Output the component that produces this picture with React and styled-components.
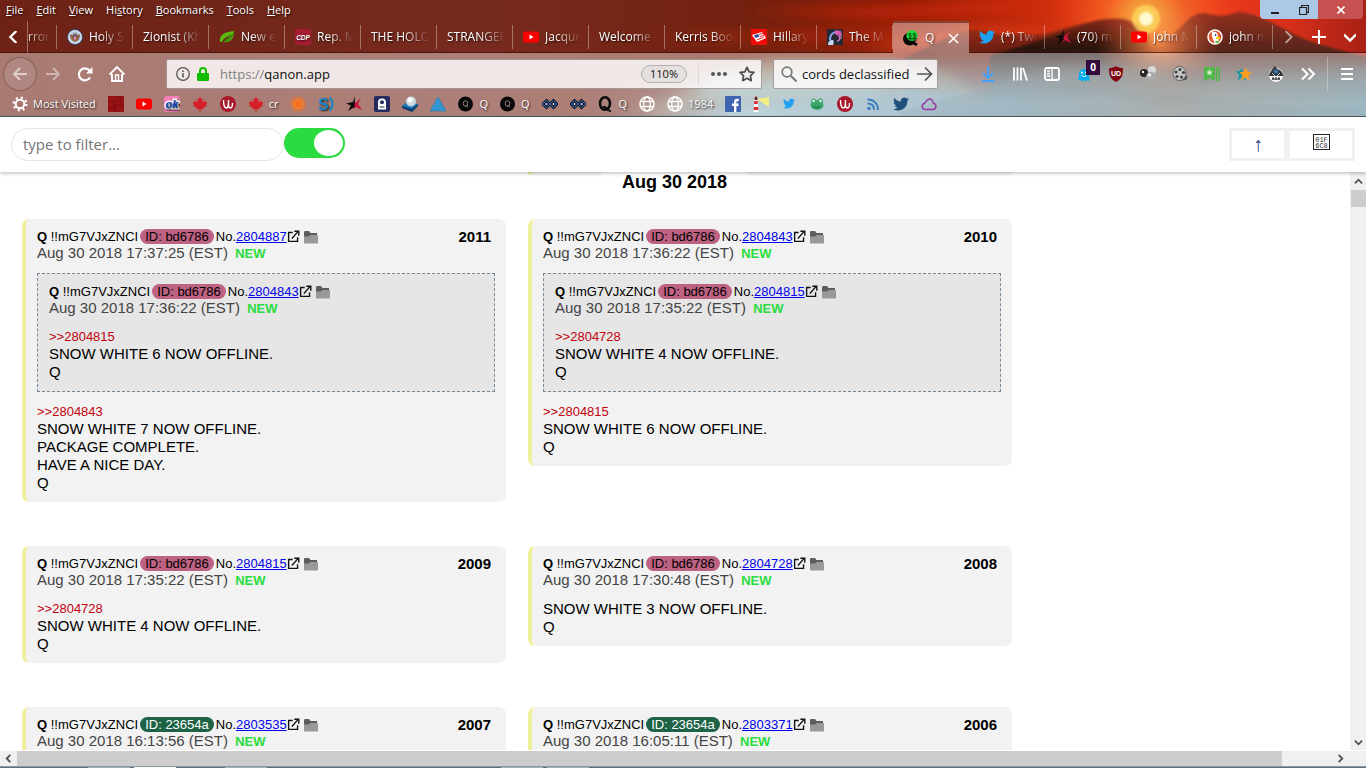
import React from "react";
import styled, { createGlobalStyle, css } from "styled-components";

const ui = '"Open Sans", "Noto Sans", sans-serif';
const arial = '"Liberation Sans", Arial, sans-serif';

const GlobalStyle = createGlobalStyle`
  * { box-sizing: border-box; }
  html, body, #root { height: 100%; }
  body { margin: 0; overflow: hidden; background: #fff; font-family: ${arial}; }
  button, input { font: inherit; color: inherit; margin: 0; }
  button { padding: 0; border: 0; background: none; }
  svg { display: block; flex: none; }
`;

/* ---------- window ---------- */

const Window = styled.div`
  display: flex;
  flex-direction: column;
  height: 100vh;
`;

const Chrome = styled.header`
  position: relative;
  flex: none;
  overflow: hidden;
  border-bottom: 1px solid #4c5f6c;
  color: #fff;
  font: 11px/16px ${ui};
  text-shadow: 1px 1px 2px rgba(0, 0, 0, 0.8);
`;

const Artwork = styled.svg`
  position: absolute;
  inset: 0;
  width: 100%;
  height: 100%;
`;

const ChromeBody = styled.div`
  position: relative;
`;

const TopRow = styled.div`
  display: flex;
  justify-content: space-between;
  align-items: flex-start;
  height: 21px;
`;

const MenuBar = styled.nav`
  display: flex;
  gap: 13px;
  padding: 2px 6px;
`;

const MenuButton = styled.button`
  line-height: 16px;
  text-shadow: inherit;
`;

const WindowButtons = styled.div`
  display: flex;
  margin-right: 3px;
  border-radius: 0 0 4px 4px;
  overflow: hidden;
`;

const WindowButton = styled.button`
  display: flex;
  align-items: center;
  justify-content: center;
  width: ${(p) => (p.$close ? 45 : 29)}px;
  height: 19px;
  background: ${(p) => (p.$close ? "#c75050" : "#adc8e6")};
`;

/* ---------- tabs ---------- */

const TabRow = styled.div`
  display: flex;
  height: 32px;
`;

const TabArrow = styled.button`
  display: flex;
  align-items: center;
  justify-content: center;
  width: ${(p) => p.$width}px;
  border-right: ${(p) => (p.$edge ? "1px solid rgba(255,255,255,.35)" : "0")};
  border-bottom: 1px solid rgba(50, 5, 0, 0.6);
`;

const TabStrip = styled.div`
  display: flex;
  flex: 1;
  justify-content: flex-end;
  overflow: hidden;
`;

const Tab = styled.button`
  display: flex;
  align-items: center;
  gap: 6px;
  flex: 0 0 ${(p) => (p.$partial ? 29 : 76)}px;
  min-width: 0;
  padding: ${(p) => (p.$partial ? "0 2px 0 0" : p.$active ? "0 10px" : "0 4px 0 10px")};
  position: relative;
  font-size: 12px;
  text-align: left;
  text-shadow: inherit;
  ${(p) =>
    p.$active
      ? css`
          background: rgba(255, 255, 255, 0.4);
          border-top: 2px solid rgba(60, 10, 0, 0.5);
        `
      : css`
          border-bottom: 1px solid rgba(50, 5, 0, 0.6);
          &::after {
            content: "";
            position: absolute;
            right: 0;
            top: 4px;
            bottom: 3px;
            width: 1px;
            background: rgba(255, 255, 255, 0.35);
          }
        `}
`;

const TabLabel = styled.span`
  flex: 1;
  white-space: nowrap;
  ${(p) =>
    !p.$solid &&
    css`
      mask-image: linear-gradient(to left, transparent 4px, #000 30px);
    `}
`;

/* ---------- navigation bar ---------- */

const Toolbars = styled.div`
  background: rgba(255, 255, 255, 0.4);
`;

const NavBar = styled.div`
  display: flex;
  align-items: center;
  height: 41px;
  padding: 0 3px;
`;

const NavButton = styled.button`
  position: relative;
  display: flex;
  align-items: center;
  justify-content: center;
  width: 32px;
  height: 32px;
`;

const BackButton = styled(NavButton)`
  width: 34px;
  height: 34px;
  border: 1px solid rgba(90, 50, 45, 0.45);
  border-radius: 50%;
  background: rgba(255, 255, 255, 0.1);
`;

const Field = styled.div`
  display: flex;
  align-items: center;
  height: 30px;
  border: 1px solid rgba(70, 50, 50, 0.45);
  border-radius: 2px;
  background: rgba(255, 255, 255, 0.82);
  color: #111;
  font-size: 13px;
  text-shadow: none;
`;

const UrlField = styled(Field)`
  flex: 1;
  margin: 0 11px 0 33px;
  padding: 0 6px 0 9px;
`;

const SearchField = styled(Field)`
  gap: 5px;
  width: 165px;
  margin-right: 34px;
  padding: 0 4px 0 7px;
`;

const UrlText = styled.label`
  position: relative;
  flex: 1;
  margin-left: 10px;
  color: #0c0c0d;
`;

const Scheme = styled.span`
  color: #808080;
`;

const PlainInput = styled.input`
  flex: 1;
  min-width: 0;
  padding: 0;
  border: 0;
  outline: 0;
  background: none;
`;

const HiddenInput = styled.input`
  position: absolute;
  inset: 0;
  width: 100%;
  border: 0;
  opacity: 0;
`;

const Zoom = styled.button`
  width: 46px;
  height: 18px;
  margin-right: 11px;
  border: 1px solid #b5b0af;
  border-radius: 9px;
  background: rgba(210, 210, 210, 0.4);
  font-size: 11px;
  line-height: 14px;
`;

const Divider = styled.span`
  width: 1px;
  height: ${(p) => p.$height}px;
  margin: 0 ${(p) => p.$after}px 0 ${(p) => p.$before || 0}px;
  background: ${(p) => p.$color};
`;

const FieldButton = styled.button`
  margin-left: ${(p) => p.$before || 0}px;
`;

const Badge = styled.span`
  position: absolute;
  left: 18px;
  top: 2px;
  width: 14px;
  height: 15px;
  background: #330b3d;
  font: bold 10px/14px ${ui};
  text-align: center;
`;

/* ---------- bookmarks ---------- */

const BookmarkBar = styled.div`
  display: flex;
  gap: 12px;
  align-items: center;
  height: 22px;
  padding: 0 12px 2px;
`;

const Bookmark = styled.a`
  display: flex;
  align-items: center;
  gap: 5px;
  color: inherit;
  text-decoration: none;
`;

/* ---------- page ---------- */

const Page = styled.div`
  flex: 1;
  min-height: 0;
  display: flex;
  flex-direction: column;
`;

const FilterBar = styled.form`
  position: relative;
  z-index: 2;
  display: flex;
  align-items: flex-start;
  flex: none;
  height: 55px;
  padding: 11px;
  background: #fff;
  box-shadow: 0 1px 4px rgba(0, 0, 0, 0.3);
`;

const FilterInput = styled.input`
  width: 273px;
  height: 33px;
  padding: 0 11px 2px;
  border: 1px solid #e6e6e6;
  border-radius: 17px;
  outline: 0;
  background: #fff;
  font: 15px ${ui};
  &::placeholder {
    color: #757575;
    opacity: 1;
  }
`;

const Toggle = styled.input`
  appearance: none;
  width: 61px;
  height: 30px;
  padding: 2px;
  border-radius: 15px;
  background: #2adc3f;
  display: flex;
  justify-content: flex-end;
  &::before {
    content: "";
    width: 29px;
    height: 26px;
    border-radius: 50%;
    background: #fff;
  }
`;

const PageButtons = styled.div`
  display: flex;
  margin-left: auto;
`;

const PageButton = styled.button`
  display: flex;
  justify-content: center;
  align-items: center;
  width: ${(p) => p.$width}px;
  height: 33px;
  padding-bottom: ${(p) => p.$lift || 0}px;
  border: 3px solid #f1f1f1;
  background: #fff;
  color: #163f7d;
  font-size: 20px;
`;

const Viewport = styled.div`
  flex: 1;
  min-height: 0;
  display: flex;
`;

const Content = styled.main`
  position: relative;
  flex: 1;
  overflow: hidden;
  padding: 0 11px;
`;

const DayHeading = styled.h2`
  position: absolute;
  top: 0;
  left: 50%;
  width: 147px;
  margin: 0 0 0 -74px;
  background: #fff;
  font: bold 18px/20px ${arial};
  text-align: center;
`;

const Grid = styled.div`
  display: grid;
  grid-template-columns: 484px 484px;
  gap: 44px 22px;
  align-items: start;
  padding: 0 11px;
`;

const Card = styled.article`
  padding: 9px 11px 10px;
  border-left: 4px solid #f0f09c;
  border-radius: 7px;
  background: #f2f2f2;
  color: #000;
  font-size: 15px;
  line-height: 18px;
`;

const CardEnd = styled.div`
  grid-column: 2;
  height: 3px;
  border-left: 4px solid #f0f09c;
  border-radius: 0 0 6px 6px;
  background: #f2f2f2;
`;

const Quote = styled.blockquote`
  margin: 11px 0 0;
  padding: 9px 11px 10px;
  border: 1px dashed #778899;
  background: #e6e6e6;
`;

const Meta = styled.div`
  display: flex;
  align-items: center;
  gap: 2px;
  height: 17px;
  font-size: 13px;
  line-height: 17px;
  white-space: pre;
`;

const UserId = styled.span`
  padding: 0 5px;
  border-radius: 8px;
  line-height: 15px;
  background: ${(p) => (p.$green ? "#1f6347" : "#bd6283")};
  color: ${(p) => (p.$green ? "#fff" : "#000")};
`;

const PostLink = styled.a`
  color: #0000ee;
`;

const LinkIcons = styled.span`
  display: flex;
  align-items: center;
  gap: 3px;
  margin-left: -2px;
`;

const PostNumber = styled.strong`
  margin-left: auto;
  padding-right: 4px;
  font-size: 15px;
`;

const Stamp = styled.div`
  height: 17px;
  color: #444;
  line-height: 15px;
`;

const NewMark = styled.strong`
  margin-left: 3px;
  color: #2adc3f;
  font-size: 13px;
`;

const Body = styled.div`
  margin-top: 11px;
`;

const Ref = styled.a`
  display: block;
  color: #c3000d;
  font-size: 13px;
  line-height: 17px;
  text-decoration: none;
`;

const Line = styled.p`
  margin: 0;
`;

/* ---------- scrollbars ---------- */

const VScroll = styled.div`
  display: flex;
  flex-direction: column;
  align-items: center;
  width: 16px;
  padding: 5px 0 3px;
  background: #f0f0f0;
`;

const VThumb = styled.div`
  width: 15px;
  height: 17px;
  margin: 4px 0 auto;
  background: #cdcdcd;
`;

const HScroll = styled.div`
  display: flex;
  align-items: center;
  flex: none;
  height: 16px;
  padding: 0 21px 0 4px;
  border-top: 1px solid #fff;
  background: #f0f0f0;
`;

const HThumb = styled.div`
  flex: 1;
  height: 15px;
  margin: 0 54px 0 4px;
  background: #cdcdcd;
`;

const TaskbarEdge = styled.footer`
  display: flex;
  gap: 4px;
  flex: none;
  height: 2px;
  padding-left: 88px;
  border-top: 1px solid #8b9aa3;
  background: #5e6e78;
`;

const TaskbarItem = styled.span`
  width: 42px;
  margin-right: ${(p) => p.$after || 0}px;
  background: ${(p) => (p.$lit ? "#f4f6f7" : "#a3afb6")};
`;

/* ---------- drawings ---------- */

const Svg = ({ s = 16, box = 16, children, ...rest }) => (
  <svg width={s} height={s} viewBox={`0 0 ${box} ${box}`} fill="none" aria-hidden="true" {...rest}>
    {children}
  </svg>
);

const Bird = ({ color = "#1da1f2", box = "0 0 24 24" }) => (
  <svg width="16" height="16" viewBox={box} aria-hidden="true">
    <path fill={color} d="M23.9 4.600c-.9.4-1.800.7-2.800.8 1-.6 1.800-1.600 2.200-2.700-1 .6-2 1-3.100 1.200a4.900 4.900 0 0 0-8.400 4.500C7.700 8.100 4.100 6.100 1.700 3.100.4 5.300 1 8.100 3.200 9.700c-.8 0-1.600-.3-2.200-.6 0 2.300 1.500 4.400 3.900 4.900-.7.2-1.500.2-2.200.1a5 5 0 0 0 4.600 3.400A9.900 9.900 0 0 1 0 19.500a14 14 0 0 0 21.500-12.400c1-.7 1.800-1.600 2.400-2.500z" />
  </svg>
);
const YouTube = () => (
  <Svg>
    <rect y="2.500" width="16" height="11" rx="2.800" fill="#f00" />
    <path d="M6.500 5.500v5l4-2.500z" fill="#fff" />
  </Svg>
);
const Seal = () => (
  <Svg>
    <circle cx="8" cy="8" r="7.500" fill="#dfe3ea" stroke="#27467c" />
    <circle cx="8" cy="8" r="5.400" fill="#a9bbd8" />
    <path d="M2.500 5.500l3 .5L8 4l2.500 2 3-.5-1.500 4.500-2.500 2.500h-3L4 10z" fill="#8b6a4a" />
    <path d="M6.500 6.500h3V10L8 11.500 6.500 10z" fill="#c8354a" />
    <path d="M6.500 6.500h3V8h-3z" fill="#2f4f9c" />
    <path d="M8 7.500v3" stroke="#fff" />
  </Svg>
);
const Leaf = () => (
  <Svg>
    <path d="M1 13C0 6 5 3 15 2c0 7-3 12-10 11 2-3 5-5 7-7-4 1-7 3-9 7z" fill="#5cb811" />
    <path d="M5 13c4 1 9-3 10-11-1 3-6 6-10 11z" fill="#3d8c08" />
  </Svg>
);
const Cdp = () => (
  <Svg>
    <rect width="16" height="16" fill="#a41c33" />
    <text x="8" y="10.500" fontSize="6.500" fontWeight="bold" fontStyle="italic" fontFamily="Liberation Sans" textAnchor="middle" fill="#fff">CDP</text>
  </Svg>
);
const RedFlag = () => (
  <Svg>
    <rect width="16" height="16" fill="#f00b0b" />
    <path d="M1 6l10-3 4 6-9 4z" fill="#fff" />
    <path d="M3 6.300l4-1.300 1.500 2.500-4 1.500z" fill="#2a4b94" />
    <path d="M8 5.500l4-1.200M9 7.500l4-1.300M6 11l7-3" stroke="#f00b0b" strokeWidth=".9" />
  </Svg>
);
const Headset = () => (
  <Svg>
    <rect width="16" height="16" fill="#252933" />
    <path d="M3 11C3 5 7 3 10 3" stroke="#8aa2e8" strokeWidth="2.200" />
    <path d="M1 16c0-4 2-5 4-5s2 2 1 5z" fill="#c5d8f8" />
    <path d="M8 1l6 1 1 4-4 1-3-2z" fill="#d65bb0" />
    <path d="M12 7c2 3 0 5-2 5" stroke="#c97cc9" strokeWidth="1.500" />
    <path d="M14 6v4" stroke="#e58bb4" />
  </Svg>
);
const QBadge = () => (
  <Svg>
    <circle cx="6.500" cy="9" r="6.500" fill="#0b0b0b" />
    <path d="M9 12l5 3" stroke="#0b0b0b" strokeWidth="3" />
    <circle cx="9" cy="5.500" r="5.500" fill="#20dc35" />
    <text x="9" y="9" fontSize="9" fontFamily="Liberation Sans" textAnchor="middle" fill="#063d0b">11</text>
  </Svg>
);
const StarMan = () => (
  <Svg>
    <path d="M8 4l1.500 3L15 2l-3 6 4 6-6-3-2 2z" fill="#c9143c" />
    <path d="M9 0L7 6 0 7.500l5 2L2 15l6.500-4z" fill="#0c0c0c" />
  </Svg>
);
const Duck = () => (
  <Svg>
    <circle cx="8" cy="8" r="7" fill="#de5833" stroke="#fff" strokeWidth="1.500" />
    <path d="M5 3c4-1 6 1 6 4l1 6-4 2c-1-4-4-7-3-12z" fill="#fff" />
    <path d="M9 8h4v2H9z" fill="#fdd20a" />
    <path d="M8 12h4v2H9z" fill="#65bc46" />
    <circle cx="8.500" cy="6" r=".9" fill="#2d4f8e" />
  </Svg>
);

const Squares = () => (
  <Svg>
    <rect width="16" height="16" fill="#981114" />
    <path d="M0 5.500h10M6 9.500h10M10.500 0v5M6.500 5v11M12.500 2v7M0 11.500h6" stroke="#7a0c0f" />
  </Svg>
);
const Ok = () => (
  <Svg>
    <rect width="16" height="16" rx="3" fill="#f67eb8" />
    <text x="8" y="12" fontSize="11" fontWeight="bold" fontStyle="italic" fontFamily="Liberation Sans" textAnchor="middle" fill="#0b3eb5" stroke="#fff" strokeWidth="3" paintOrder="stroke">ok</text>
  </Svg>
);
const Maple = () => (
  <Svg>
    <path d="M8 .5l1.500 3 1.500-1-.5 4 2.500-2 .5 1.500 2 .5-1.500 2 1 1-4 3 .3 1L8.500 13v3h-1v-3l-2.800.5.3-1-4-3 1-1-1.500-2 2-.5.500-1.500 2.500 2-.5-4 1.500 1z" fill="#d5202a" />
  </Svg>
);
const RedRound = () => (
  <Svg>
    <circle cx="8" cy="8" r="8" fill="#a8192b" />
    <path d="M3.500 4c0 4 1 8 3 8s2-3 2-8M8.500 8c0 3 1 4 2 4s2-2 2-5" stroke="#fff" strokeWidth="1.400" />
  </Svg>
);
const Sun = () => (
  <Svg>
    <circle cx="8" cy="8" r="6.800" stroke="#f36f21" strokeWidth="2" strokeDasharray="1.700 1.350" />
    <circle cx="8" cy="8" r="5.300" fill="#f7862a" />
    <circle cx="8" cy="8" r="4" fill="#f36f21" />
  </Svg>
);
const Sputnik = () => (
  <Svg>
    <text x="0" y="14" fontSize="16" fontWeight="bold" fontFamily="Liberation Sans" fill="#1685c6">S</text>
    <path d="M11.500 1.500c4 3 4 10 0 13" stroke="#1685c6" strokeWidth="2" />
  </Svg>
);
const Keeper = () => (
  <Svg>
    <rect width="16" height="16" rx="2" fill="#252b5e" />
    <path d="M4 13.500V6.500a4 4 0 0 1 8 0v7z" fill="#fff" />
    <circle cx="8" cy="6.300" r="2" fill="#252b5e" />
    <path d="M5.500 11h5" stroke="#252b5e" />
  </Svg>
);
const Orb = () => (
  <Svg>
    <path d="M0 10l6-5 10 3-6 7z" fill="#1c76b8" />
    <path d="M0 10l10 3 6-5v2l-6 6-10-4z" fill="#0a3d69" />
    <circle cx="9" cy="5.500" r="5" fill="#cfd9e0" />
    <circle cx="8" cy="4" r="2.500" fill="#fff" />
  </Svg>
);
const Triangle = () => (
  <Svg><path d="M8 1l8 14H0z" fill="#3495d3" stroke="#2577ad" strokeWidth=".6" /></Svg>
);
const QDisc = () => (
  <Svg>
    <circle cx="7.500" cy="8" r="7.500" fill="#070707" />
    <ellipse cx="7.500" cy="7.500" rx="2.300" ry="2.800" stroke="#8c7f79" />
    <path d="M7.500 9.500l2.500 1.500" stroke="#8c7f79" />
  </Svg>
);
const Rings = () => (
  <Svg>
    <path d="M4.500 4.500L8 8l-3.500 3.500L1 8zM11.500 4.500L15 8l-3.500 3.500L8 8z" stroke="#111b2e" strokeWidth="2.800" />
    <path d="M4.500 4.500L8 8l-3.500 3.500L1 8zM11.500 4.500L15 8l-3.500 3.500L8 8z" stroke="#346fc0" strokeWidth="1" />
    <path d="M4.500 7v2M11.500 7v2" stroke="#cfe0f7" />
  </Svg>
);
const BigQ = () => (
  <Svg>
    <ellipse cx="7" cy="7.500" rx="5" ry="6.200" stroke="#0b0b0b" strokeWidth="2.600" />
    <path d="M5 11c3-2 4 5 8 4" stroke="#0b0b0b" strokeWidth="1.800" />
  </Svg>
);
const Globe = () => (
  <Svg>
    <circle cx="8" cy="8" r="7" stroke="#fff" strokeWidth="1.600" />
    <ellipse cx="8" cy="8" rx="3.300" ry="7" stroke="#fff" strokeWidth="1.300" />
    <path d="M2 5.500h12M2 10.500h12" stroke="#fff" strokeWidth="1.300" />
  </Svg>
);
const Facebook = () => (
  <Svg>
    <rect width="16" height="16" rx="1" fill="#3f65b0" />
    <path d="M9 16v-6H7V7.500h2V6c0-2 1.200-3.200 3.200-3.200h1.600v2.400h-1.200c-1 0-1.200.5-1.200 1.200v1.100h2.300L13.400 10h-2v6z" fill="#fff" />
  </Svg>
);
const Lighthouse = () => (
  <Svg>
    <path d="M4 3l12-2v10z" fill="#f4ee84" />
    <path d="M1.500 2L3 0l1.500 2v2h-3z" fill="#6b2428" />
    <path d="M1.500 4h3l1 12h-5z" fill="#fff" />
    <path d="M1.300 5h3.400v3H1.100zM.9 11h4.400v3H.7z" fill="#e02430" />
  </Svg>
);
const Frog = () => (
  <Svg>
    <ellipse cx="8" cy="9" rx="6.500" ry="5" fill="#3aa76b" />
    <circle cx="4.500" cy="5" r="2.500" fill="#3aa76b" />
    <circle cx="11.500" cy="5" r="2.500" fill="#3aa76b" />
    <circle cx="4.500" cy="5" r="1.300" fill="#dff3e6" />
    <circle cx="11.500" cy="5" r="1.300" fill="#dff3e6" />
    <path d="M4 10c2 2 6 2 8 0" stroke="#1d6b40" />
  </Svg>
);
const Rss = () => (
  <Svg>
    <circle cx="4" cy="12.500" r="1.700" fill="#3c7ebd" />
    <path d="M2.500 7.500c4 0 6.500 2.500 6.500 6.500M2.500 3.500C9 3.500 13 7.500 13 14" stroke="#3c7ebd" strokeWidth="1.800" />
  </Svg>
);
const Cloud = () => (
  <Svg>
    <path d="M4 13.500a3.200 3.200 0 0 1-.3-6.300C5 5 6 3.500 8 3s4 2 4.300 4.200a3.200 3.200 0 0 1 0 6.300z" stroke="#963ba5" strokeWidth="1.500" />
  </Svg>
);
const Gear = () => (
  <Svg>
    <circle cx="8" cy="8" r="4.300" stroke="#fff" strokeWidth="2" />
    <circle cx="8" cy="8" r="6.300" stroke="#fff" strokeWidth="2.400" strokeDasharray="2 2.950" />
  </Svg>
);

const navIcons = [
  ["Downloads", <Svg key="i"><path d="M8 .5v11M3 7l5 5 5-5M2 15h12" stroke="#45a1ff" strokeWidth="1.900" /></Svg>],
  ["Library", <Svg key="i"><path d="M2 1.500v13M5.500 1.500v13M9 1.500v13M11 2l4 12.500" stroke="#fff" strokeWidth="1.800" /></Svg>],
  ["Sidebars", <Svg key="i"><rect x="1" y="2" width="14" height="12" rx="2" stroke="#fff" strokeWidth="1.800" /><path d="M8 2v12M3 5h3M3 7.500h3M3 10h3" stroke="#fff" strokeWidth="1.300" /></Svg>],
  ["Ghostery", <Svg key="i"><path d="M1 14c2-1 2-3 2-6a5 5 0 0 1 10 0c0 3 0 5 1 7l-3-1-1.500 1.500L8 14l-2 1.500L4.500 14z" fill="#00aef0" /><circle cx="6" cy="6.500" r="1" fill="#fff" /><circle cx="10" cy="6.500" r="1" fill="#fff" /><path d="M5.500 9c1 2 4 2 5 0" stroke="#fff" /></Svg>],
  ["uBlock", <Svg key="i"><path d="M8 0c2 1.500 4 2 7 2 0 7-1 11-7 14C2 13 1 9 1 2c3 0 5-.5 7-2z" fill="#800610" /><text x="8" y="10" fontSize="7" fontWeight="bold" fontFamily="Liberation Sans" textAnchor="middle" fill="#fff">UD</text></Svg>],
  ["Spheres", <Svg key="i"><circle cx="12" cy="4" r="4" fill="#d8d8d8" /><circle cx="4" cy="7" r="4" fill="#242424" /><circle cx="11" cy="10.500" r="4.800" fill="#a9a9a9" /><circle cx="3" cy="6" r="1.200" fill="#fff" /><circle cx="9.500" cy="9" r="1.800" fill="#eee" /></Svg>],
  ["Film reel", <Svg key="i"><path d="M6 15l8-1 2-3-3-2z" fill="#555" /><ellipse cx="7.500" cy="7.500" rx="6.500" ry="7" fill="#c8c8c8" stroke="#666" /><g fill="#444"><circle cx="8" cy="3.500" r="1.600" /><circle cx="4" cy="6" r="1.600" /><circle cx="5" cy="10.500" r="1.600" /><circle cx="9.500" cy="11" r="1.600" /><circle cx="11.500" cy="6.500" r="1.600" /></g></Svg>],
  ["Bookmarks manager", <Svg key="i"><path d="M0 1h11v14l-5.500-3L0 15zM12 1h1.500v14H12zM14.500 1H16v14h-1.500z" fill="#4fb848" /><path d="M5.500 3l1 2.500H9L7 7l.8 2.500-2.300-1.400-2.300 1.400L4 7 2 5.500h2.500z" fill="#d8ecc8" /></Svg>],
  ["Star", <Svg key="i"><path d="M5 2l2 4h6l-4 4 1 5-4-3-4 2 1-5-3-4h4z" fill="#1c98a3" /><path d="M10 1l1.500 4.800L16 6l-3.700 3.300 1.400 5L9.500 11.500l-4.400 2.800 1.400-5L3.500 6H8z" fill="#ff9d1c" /></Svg>],
  ["Knight", <Svg key="i"><circle cx="8" cy="9" r="7" fill="#f4f4f4" /><path d="M1 10C2 5 5 3 7 0l2 3c4 1 6 4 6 7z" fill="#30343a" /><path d="M5 5l3-2 3 3-3 2z" fill="#3c78ad" /><path d="M4 7l3 3M12 7l-3 3" stroke="#cfd4d8" /><path d="M4 13h8M5 11v3M8 11v3M11 11v3" stroke="#222" /></Svg>],
  ["More tools", <Svg key="i"><path d="M2 2.500L7.500 8 2 13.500M8.500 2.500L14 8l-5.500 5.500" stroke="#fff" strokeWidth="2" /></Svg>],
];

const tabs = [
  { label: "rror", partial: true },
  { icon: <Seal />, label: "Holy S" },
  { label: "Zionist (Kh" },
  { icon: <Leaf />, label: "New e" },
  { icon: <Cdp />, label: "Rep. M" },
  { label: "THE HOLO" },
  { label: "STRANGER" },
  { icon: <YouTube />, label: "Jacque" },
  { label: "Welcome -" },
  { label: "Kerris Book" },
  { icon: <RedFlag />, label: "Hillary" },
  { icon: <Headset />, label: "The M" },
  { icon: <QBadge />, label: "Q", active: true },
  { icon: <Bird />, label: "(*) Twi" },
  { icon: <StarMan />, label: "(70) m" },
  { icon: <YouTube />, label: "John M" },
  { icon: <Duck />, label: "john m" },
];

const bookmarks = [
  [<Gear key="i" />, "Most Visited"], [<Squares key="i" />], [<YouTube key="i" />], [<Ok key="i" />], [<Maple key="i" />],
  [<RedRound key="i" />], [<Maple key="i" />, "cr"], [<Sun key="i" />], [<Sputnik key="i" />], [<StarMan key="i" />],
  [<Keeper key="i" />], [<Orb key="i" />], [<Triangle key="i" />], [<QDisc key="i" />, "Q"], [<QDisc key="i" />, "Q"],
  [<Rings key="i" />], [<Rings key="i" />], [<BigQ key="i" />, "Q"], [<Globe key="i" />], [<Globe key="i" />, "1984"],
  [<Facebook key="i" />], [<Lighthouse key="i" />], [<Bird key="i" box="-4 -3 32 32" />], [<Frog key="i" />], [<RedRound key="i" />],
  [<Rss key="i" />], [<Bird key="i" color="#1f4f7c" />], [<Cloud key="i" />],
];

const menus = [["", "F", "ile"], ["", "E", "dit"], ["", "V", "iew"], ["Hi", "s", "tory"], ["", "B", "ookmarks"], ["", "T", "ools"], ["", "H", "elp"]];

const posts = [
  {
    n: 2011, id: "bd6786", no: "2804887", time: "17:37:25",
    quote: { id: "bd6786", no: "2804843", time: "17:36:22", refNo: "2804815", lines: ["SNOW WHITE 6 NOW OFFLINE.", "Q"] },
    refNo: "2804843", lines: ["SNOW WHITE 7 NOW OFFLINE.", "PACKAGE COMPLETE.", "HAVE A NICE DAY.", "Q"],
  },
  {
    n: 2010, id: "bd6786", no: "2804843", time: "17:36:22",
    quote: { id: "bd6786", no: "2804815", time: "17:35:22", refNo: "2804728", lines: ["SNOW WHITE 4 NOW OFFLINE.", "Q"] },
    refNo: "2804815", lines: ["SNOW WHITE 6 NOW OFFLINE.", "Q"],
  },
  { n: 2009, id: "bd6786", no: "2804815", time: "17:35:22", refNo: "2804728", lines: ["SNOW WHITE 4 NOW OFFLINE.", "Q"] },
  { n: 2008, id: "bd6786", no: "2804728", time: "17:30:48", lines: ["SNOW WHITE 3 NOW OFFLINE.", "Q"] },
  { n: 2007, id: "23654a", no: "2803535", time: "16:13:56", lines: [] },
  { n: 2006, id: "23654a", no: "2803371", time: "16:05:11", lines: [] },
];

function Sunset() {
  return (
    <Artwork viewBox="0 0 1366 117" preserveAspectRatio="none" aria-hidden="true">
      <defs>
        <linearGradient id="sky" x1="0" x2="1">
          <stop offset="0" stopColor="#6e2215" />
          <stop offset=".35" stopColor="#772b1f" />
          <stop offset=".56" stopColor="#73200f" />
          <stop offset=".66" stopColor="#8e1b06" />
          <stop offset=".75" stopColor="#c22a0c" />
          <stop offset=".84" stopColor="#f0401a" />
          <stop offset=".93" stopColor="#e0331c" />
          <stop offset="1" stopColor="#a82015" />
        </linearGradient>
        <radialGradient id="glow" gradientUnits="userSpaceOnUse" cx="1146" cy="20" r="100">
          <stop offset="0" stopColor="#fffde0" />
          <stop offset=".07" stopColor="#fff27a" />
          <stop offset=".16" stopColor="#ffb83c" stopOpacity=".95" />
          <stop offset=".4" stopColor="#ff7a2a" stopOpacity=".6" />
          <stop offset="1" stopColor="#ff4a1c" stopOpacity="0" />
        </radialGradient>
        <linearGradient id="lake" gradientUnits="userSpaceOnUse" x1="560" x2="1366" y1="0" y2="0">
          <stop offset="0" stopColor="#7c3e33" stopOpacity="0" />
          <stop offset=".22" stopColor="#92b6c4" />
          <stop offset=".55" stopColor="#6a94a8" />
          <stop offset=".76" stopColor="#80827c" />
          <stop offset="1" stopColor="#5c8ea0" />
        </linearGradient>
        <linearGradient id="fadeDown" x1="0" x2="0" y1="0" y2="1">
          <stop offset="0" stopColor="#fff" stopOpacity="0" />
          <stop offset="1" stopColor="#fff" />
        </linearGradient>
        <mask id="lakeMask"><rect y="56" width="1366" height="58" fill="url(#fadeDown)" /><rect y="114" width="1366" height="3" fill="#fff" /></mask>
        <linearGradient id="ridge" gradientUnits="userSpaceOnUse" x1="0" x2="0" y1="18" y2="117">
          <stop offset="0" stopColor="#8c2a14" />
          <stop offset=".3" stopColor="#2b130f" />
          <stop offset="1" stopColor="#4a5458" />
        </linearGradient>
        <linearGradient id="ridgeRight" gradientUnits="userSpaceOnUse" x1="0" x2="0" y1="10" y2="117">
          <stop offset="0" stopColor="#96301f" />
          <stop offset=".4" stopColor="#54251c" />
          <stop offset="1" stopColor="#566a70" />
        </linearGradient>
        <radialGradient id="haze" gradientUnits="userSpaceOnUse" cx="1158" cy="42" r="62">
          <stop offset="0" stopColor="#ff9350" stopOpacity=".9" />
          <stop offset="1" stopColor="#d1552f" stopOpacity="0" />
        </radialGradient>
        <filter id="soft" x="-10%" y="-30%" width="120%" height="160%"><feGaussianBlur stdDeviation="6" /></filter>
        <filter id="edge" x="-5%" y="-10%" width="110%" height="120%"><feGaussianBlur stdDeviation="1" /></filter>
      </defs>
      <rect width="1366" height="117" fill="url(#sky)" />
      <g filter="url(#soft)" opacity=".6">
        <path d="M740 12L1000 2l90 6-200 10z" fill="#e02c08" />
        <path d="M640 38l260-12 130 8-120 10z" fill="#b82a0d" />
        <path d="M860 50l120-24 90 6-90 20z" fill="#e8431d" />
      </g>
      <rect x="1040" width="212" height="117" fill="url(#glow)" />
      <g filter="url(#edge)">
        <path d="M1150 117V48c15-6 25-14 38-28 8-7 14-8 24-5 10 2 16 0 26-3 10 0 18 4 26 7 18 8 32 18 50 24 22 6 40 12 60 16v58z" fill="url(#ridgeRight)" />
        <path d="M905 117V58c24-10 40-22 62-27 16-3 28 6 46 4 12-2 24 2 36-2 24-8 50-14 70-14 14 0 24 6 34 22 14 20 30 28 60 36v40z" fill="url(#ridge)" opacity=".55" />
        <path d="M990 117V56c30-8 50-16 72-24 24-8 34-13 52-13 14-1 22 4 32 20 12 20 24 32 44 48v30z" fill="url(#ridge)" />
      </g>
      <rect x="1096" width="124" height="117" fill="url(#haze)" />
      <circle cx="1146" cy="19" r="14" fill="#ffd95a" opacity=".75" filter="url(#edge)" />
      <circle cx="1146" cy="19" r="7" fill="#fffbd0" filter="url(#edge)" />
      <g filter="url(#soft)">
        <path d="M980 130V90l90-24 80 4 60 14 170-16v62z" fill="#5e6262" opacity=".6" />
        <path d="M640 116l80-44 60-12h110l60 16 60 40z" fill="#a3966e" opacity=".7" />
        <path d="M700 84h180v14H700z" fill="#a9c4bd" opacity=".8" />
        <path d="M640 124l150-18 120-18 60 12 140-2 60 26z" fill="#7fb0c6" opacity=".8" />
      </g>
      <rect width="1366" height="117" fill="url(#lake)" mask="url(#lakeMask)" />
      <path d="M900 112c40-10 70-22 110-24 30 2 50-8 80-2 40 8 90 4 130 14 50 10 100 8 146 10v7H900z" fill="#47606d" opacity=".2" filter="url(#edge)" />
    </Artwork>
  );
}

function PostHead({ post, number }) {
  return (
    <>
      <Meta>
        <span><b>Q</b> !!mG7VJxZNCI</span>
        <UserId $green={post.id === "23654a"}>ID: {post.id}</UserId>
        <span>No.<PostLink href={`#${post.no}`}>{post.no}</PostLink></span>
        <LinkIcons>
          <Svg s={13}>
            <path d="M7 3H2v11h11V9" stroke="#111" strokeWidth="1.700" />
            <path d="M6 10.500L13.500 2M9 1.500h5.500V7" stroke="#111" strokeWidth="1.700" />
          </Svg>
          <Svg>
            <path d="M1 3.500C1 2.500 1.500 2 2.500 2H6l1.500 2H14v5H1z" fill="#5d5d5d" />
            <path d="M1 7.500h5L7.500 6H14c1 0 1 .5 1 1v6.500c0 .5-.5 1-1 1H2c-.5 0-1-.5-1-1z" fill="#999" />
          </Svg>
        </LinkIcons>
        {number && <PostNumber>{number}</PostNumber>}
      </Meta>
      <Stamp>
        Aug 30 2018 {post.time} (EST) <NewMark>NEW</NewMark>
      </Stamp>
    </>
  );
}

function PostBody({ post }) {
  return (
    <Body>
      {post.refNo && <Ref href={`#${post.refNo}`}>&gt;&gt;{post.refNo}</Ref>}
      {post.lines.map((line) => <Line key={line}>{line}</Line>)}
    </Body>
  );
}

const Chevron = ({ d, w = 2, s = 9, color = "#505050" }) => (
  <Svg s={s} box={10}><path d={d} stroke={color} strokeWidth={w} /></Svg>
);

export default function App() {
  return (
    <Window>
      <GlobalStyle />
      <Chrome>
        <Sunset />
        <ChromeBody>
          <TopRow>
            <MenuBar>
              {menus.map(([a, key, b]) => <MenuButton key={key + b}>{a}<u>{key}</u>{b}</MenuButton>)}
            </MenuBar>
            <WindowButtons>
              <WindowButton aria-label="Minimize"><Svg s={10} box={10}><path d="M1 8h8" stroke="#222" strokeWidth="2" /></Svg></WindowButton>
              <WindowButton aria-label="Restore"><Svg s={10} box={10}><path d="M.5 2.500h7v7h-7zM2.500 2.500v-2h7v7h-2" stroke="#222" strokeWidth="1.200" /></Svg></WindowButton>
              <WindowButton $close aria-label="Close"><Svg s={8} box={8}><path d="M.5.5l7 7M7.500.5l-7 7" stroke="#fff" strokeWidth="1.600" /></Svg></WindowButton>
            </WindowButtons>
          </TopRow>
          <TabRow>
            <TabArrow $width={28} $edge aria-label="Scroll tabs left"><Chevron d="M7 0L2 5l5 5" s={12} color="#fff" /></TabArrow>
            <TabStrip>
              {tabs.map((t) => (
                <Tab key={t.label} $active={t.active} $partial={t.partial}>
                  {t.icon}
                  <TabLabel $solid={t.active}>{t.label}</TabLabel>
                  {t.active && <Svg s={11} box={11}><path d="M1 1l9 9M10 1l-9 9" stroke="#fff" strokeWidth="1.600" /></Svg>}
                </Tab>
              ))}
            </TabStrip>
            <TabArrow $width={30} aria-label="Scroll tabs right"><Chevron d="M3 0l5 5-5 5" s={12} w={1.5} color="#b9a29c" /></TabArrow>
            <TabArrow $width={31} aria-label="New tab"><Svg s={14} box={14}><path d="M7 0v14M0 7h14" stroke="#fff" strokeWidth="2" /></Svg></TabArrow>
            <TabArrow $width={32} aria-label="All tabs"><Chevron d="M0 3l5 5 5-5" s={12} color="#fff" /></TabArrow>
          </TabRow>
          <Toolbars>
            <NavBar>
              <BackButton aria-label="Back"><Svg><path d="M15 8H2M8 2L2 8l6 6" stroke="#fff" strokeOpacity=".6" strokeWidth="1.800" /></Svg></BackButton>
              <NavButton aria-label="Forward"><Svg><path d="M1 8h13M8 2l6 6-6 6" stroke="#fff" strokeOpacity=".45" strokeWidth="1.800" /></Svg></NavButton>
              <NavButton aria-label="Reload"><Svg><path d="M13 11.500A6 6 0 1 1 12.500 4.500" stroke="#fff" strokeWidth="2.200" /><path d="M15.500 1v6.500H9z" fill="#fff" /></Svg></NavButton>
              <NavButton aria-label="Home"><Svg><path d="M.5 8.500L8 1l7.500 7.500" stroke="#fff" strokeWidth="1.800" /><path d="M3 8v7h10V8" stroke="#fff" strokeWidth="2" /><path d="M6.500 15V9h3v6" stroke="#fff" strokeWidth="1.500" /></Svg></NavButton>
              <UrlField>
                <Svg s={14}><circle cx="8" cy="8" r="7.200" stroke="#555" strokeWidth="1.400" /><path d="M8 7v5M8 4v1.800" stroke="#555" strokeWidth="1.800" /></Svg>
                <FieldButton $before={6} aria-label="Secure connection"><Svg s={14} box={14}><path d="M4 7V4a3 3 0 0 1 6 0v3" stroke="#12bc00" strokeWidth="2" /><rect x="1" y="6" width="12" height="8" rx="1" fill="#12bc00" /></Svg></FieldButton>
                <UrlText>
                  <Scheme>https://</Scheme>qanon.app
                  <HiddenInput aria-label="Address" type="url" />
                </UrlText>
                <Zoom>110%</Zoom>
                <Divider $height={22} $after={12} $color="#dcd6d5" />
                <FieldButton aria-label="Page actions"><Svg><circle cx="2" cy="8" r="2" fill="#555" /><circle cx="8" cy="8" r="2" fill="#555" /><circle cx="14" cy="8" r="2" fill="#555" /></Svg></FieldButton>
                <FieldButton $before={12} aria-label="Bookmark this page"><Svg><path d="M8 1.300l2.100 4.500 4.800.6-3.500 3.400.9 4.900L8 12.300l-4.300 2.400.9-4.900L1.100 6.400l4.800-.6z" stroke="#4c4c4c" strokeWidth="1.700" strokeLinejoin="round" /></Svg></FieldButton>
              </UrlField>
              <SearchField>
                <Svg><circle cx="6" cy="6" r="4.800" stroke="#777" strokeWidth="1.700" /><path d="M9.500 9.500l6 6" stroke="#777" strokeWidth="2" /></Svg>
                <PlainInput aria-label="Search" defaultValue="cords declassified" />
                <FieldButton aria-label="Go"><Svg><path d="M0 8h14M8 1.500L14.500 8 8 14.500" stroke="#555" strokeWidth="1.700" /></Svg></FieldButton>
              </SearchField>
              {navIcons.map(([name, icon]) => (
                <NavButton key={name} aria-label={name}>
                  {icon}
                  {name === "Ghostery" && <Badge>0</Badge>}
                </NavButton>
              ))}
              <Divider $height={34} $before={3} $after={3} $color="rgba(255,255,255,.3)" />
              <NavButton aria-label="Open menu"><Svg><path d="M2 3h12M2 8h12M2 13h12" stroke="#fff" strokeWidth="2" /></Svg></NavButton>
            </NavBar>
            <BookmarkBar>
              {bookmarks.map(([icon, label], i) => (
                <Bookmark key={i} href="#bookmark" aria-label={label || "Bookmark"}>{icon}{label}</Bookmark>
              ))}
            </BookmarkBar>
          </Toolbars>
        </ChromeBody>
      </Chrome>

      <Page>
        <FilterBar>
          <FilterInput aria-label="Filter posts" placeholder="type to filter..." />
          <Toggle type="checkbox" role="switch" aria-label="Live updates" defaultChecked />
          <PageButtons>
            <PageButton type="button" $width={58} aria-label="Back to top">↑</PageButton>
            <PageButton type="button" $width={68} $lift={5} aria-label="Information">
              <svg width="17" height="16" viewBox="0 0 17 16" fill="none">
                <rect x=".5" y=".5" width="16" height="15" stroke="#222" />
                <text x="8.500" y="7.500" fontSize="7" fontFamily="Liberation Mono" textAnchor="middle" fill="#333">01F</text>
                <text x="8.500" y="13.500" fontSize="7" fontFamily="Liberation Mono" textAnchor="middle" fill="#333">6C8</text>
              </svg>
            </PageButton>
          </PageButtons>
        </FilterBar>
        <Viewport>
          <Content>
            <Grid>
              <CardEnd />
              {posts.map((p) => (
                <Card key={p.n}>
                  <PostHead post={p} number={p.n} />
                  {p.quote && (
                    <Quote>
                      <PostHead post={p.quote} />
                      <PostBody post={p.quote} />
                    </Quote>
                  )}
                  <PostBody post={p} />
                </Card>
              ))}
            </Grid>
            <DayHeading>Aug 30 2018</DayHeading>
          </Content>
          <VScroll>
            <Chevron d="M1 7l4-4 4 4" />
            <VThumb />
            <Chevron d="M1 3l4 4 4-4" />
          </VScroll>
        </Viewport>
      </Page>
      <HScroll>
        <Chevron d="M7 1L3 5l4 4" />
        <HThumb />
        <Chevron d="M3 1l4 4-4 4" />
      </HScroll>
      <TaskbarEdge>
        <TaskbarItem />
        <TaskbarItem $lit $after={45} />
        <TaskbarItem $after={230} />
        <TaskbarItem />
        <TaskbarItem />
      </TaskbarEdge>
    </Window>
  );
}
